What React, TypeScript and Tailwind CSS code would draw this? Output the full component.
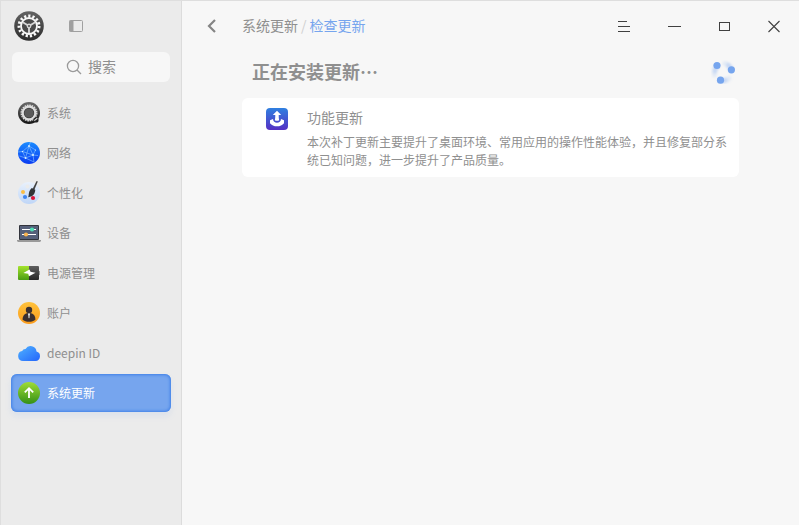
import React, { useState } from "react";

const LogoIcon = () => (
    <svg className="w-[30px] h-[30px]" viewBox="0 0 30 30">
        <defs>
            <linearGradient id="logo" x1="0" y1="0" x2="0" y2="1">
                <stop offset="0" stopColor="#636363" />
                <stop offset="1" stopColor="#2c2c2c" />
            </linearGradient>
        </defs>
        <circle cx="15" cy="15" r="14.8" fill="url(#logo)" />
        <circle cx="15" cy="15" r="10" fill="none" stroke="#f8f8f8" strokeWidth="3" strokeDasharray="2.2 1.988" />
        <circle cx="15" cy="15" r="8" fill="#4a4a4a" stroke="#f8f8f8" strokeWidth="1.800" />
        <path d="M15 15v7M15 15l-6.200-3.800M15 15l6.200-3.800" stroke="#d6d6d6" strokeWidth="1.900" />
        <circle cx="15" cy="15" r="2.400" fill="#d6d6d6" />
        <circle cx="15" cy="15" r="1.100" fill="#555" />
    </svg>
);

const SystemeIcon = () => (
    <svg className="w-[22px] h-[22px]" viewBox="0 0 22 22">
        <defs>
            <linearGradient id="sys" x1="0" y1="0" x2="0" y2="1">
                <stop offset="0" stopColor="#6a6a6a" />
                <stop offset="1" stopColor="#151515" />
            </linearGradient>
        </defs>
        <circle cx="11" cy="11" r="11" fill="url(#sys)" />
        <circle cx="11" cy="11" r="7.800" fill="none" stroke="#dcdcdc" strokeWidth="1.400" strokeDasharray="1.700 .75" />
        <circle cx="11" cy="11" r="6.300" fill="#3a3a3a" stroke="#dcdcdc" strokeWidth="2.200" />
        <circle cx="11" cy="11" r="4.600" fill="#5a5a5a" />
        <circle cx="18" cy="18" r="2.600" fill="#222" />
        <path d="M16.300 18.600l3-2.400" stroke="#ddd" strokeWidth="1.200" />
    </svg>
);

const ReseauIcon = () => (
    <svg className="w-[22px] h-[22px]" viewBox="0 0 22 22">
        <defs>
            <linearGradient id="net" x1="0" y1="0" x2="0" y2="1">
                <stop offset="0" stopColor="#1a8bff" />
                <stop offset="1" stopColor="#0a3cf2" />
            </linearGradient>
        </defs>
        <circle cx="11" cy="11" r="11" fill="url(#net)" />
        <path
            d="M11 4L4.500 9.500M11 4l4 9M11 4L7.500 16M11 4l6.500 4M4.500 9.500l10.500 3.500M4.500 9.500l3 6.500M15 13l-7.500 3M15 13l2.500-5M15 13l5 .5M15 13l1 7M7.500 16l8.500 4M7.500 16L1.500 14M11 4l1.500-4M4.500 9.500L0 10"
            fill="none"
            stroke="#8cc4ff"
            strokeWidth=".6"
        />
        <g fill="#d9efff">
            <circle cx="11" cy="4" r=".9" />
            <circle cx="4.500" cy="9.500" r=".7" />
            <circle cx="15" cy="13" r="1" />
            <circle cx="7.500" cy="16" r=".9" />
            <circle cx="17.500" cy="8" r=".6" />
        </g>
    </svg>
);

const PersonnalisationIcon = () => (
    <svg className="w-[22px] h-[22px] overflow-visible" viewBox="0 0 22 22">
        <defs>
            <linearGradient id="pal" x1="0" y1="0" x2="0" y2="1">
                <stop offset="0" stopColor="#e9f1fc" />
                <stop offset="1" stopColor="#bfd6f7" />
            </linearGradient>
        </defs>
        <circle cx="11" cy="11" r="11" fill="url(#pal)" />
        <circle cx="9.500" cy="4.500" r="2" fill="#ebebeb" />
        <circle cx="5" cy="10" r="2" fill="#fbbe45" />
        <circle cx="7" cy="15" r="2.100" fill="#3f86f0" />
        <circle cx="15" cy="16" r="2.100" fill="#d8133c" />
        <path d="M18.600-1l1.200.6-3.300 8-1.800-.8z" fill="#444" />
        <path d="M13.800 6l3.500 1.800c-.3 3.400-1.500 7-7.200 7.400.8-1.200.4-2.500.9-4.400.4-2 1.500-3.700 2.800-4.800z" fill="#2f3338" />
    </svg>
);

const AppareilIcon = () => (
    <svg className="w-6 h-[22px]" viewBox="0 0 24 22">
        <rect x="2" y="3" width="20" height="15" rx="1" fill="#32343c" />
        <rect x="3" y="4" width="18" height="13" fill="#56607a" />
        <path d="M5 7.500h14M5 12.500h14" stroke="#fff" strokeWidth="1" />
        <circle cx="15" cy="7.500" r="2.100" fill="#4fe0b5" />
        <circle cx="9" cy="12.500" r="2.100" fill="#fbb552" />
        <path d="M0 18h24v1l-1 1H1l-1-1z" fill="#9a9a9a" />
    </svg>
);

const EnergieIcon = () => (
    <svg className="w-[22px] h-[22px]" viewBox="0 0 22 22">
        <defs>
            <linearGradient id="bat" x1="0" y1="0" x2="0" y2="1">
                <stop offset="0" stopColor="#a5e32d" />
                <stop offset="1" stopColor="#4a9d13" />
            </linearGradient>
            <linearGradient id="bat2" x1="0" y1="0" x2="0" y2="1">
                <stop offset="0" stopColor="#5e5e5e" />
                <stop offset="1" stopColor="#262626" />
            </linearGradient>
        </defs>
        <path d="M1 4h10v14H1a1 1 0 01-1-1V5a1 1 0 011-1z" fill="url(#bat)" />
        <path d="M11 4h9a1 1 0 011 1v12a1 1 0 01-1 1h-9z" fill="url(#bat2)" />
        <path d="M21.500 9v4" stroke="#999" />
        <path d="M11.500 7.500L12.500 9.800l5 .9-6.500 3.500-.8-2.500-4.800-.7z" fill="#fff" />
    </svg>
);

const CompteIcon = () => (
    <svg className="w-[22px] h-[22px]" viewBox="0 0 22 22">
        <defs>
            <linearGradient id="acc" x1="0" y1="0" x2="0" y2="1">
                <stop offset="0" stopColor="#ffc23b" />
                <stop offset="1" stopColor="#fb9c1c" />
            </linearGradient>
        </defs>
        <circle cx="11" cy="11" r="11" fill="url(#acc)" />
        <circle cx="11" cy="8" r="3.200" fill="#3b3030" />
        <path d="M9.500 11h3c3 .6 4.800 2.500 5 6.500-1.500 1.600-4 2.300-6.500 2.300s-5-.7-6.500-2.300c.2-4 2-5.900 5-6.500z" fill="#3b3030" />
        <path d="M9.800 11.500L11 16.500l1.200-5z" fill="#fff" />
        <path d="M11 11.500l.8 4-.8 1-.8-1z" fill="#999" />
    </svg>
);

const NuageIcon = () => (
    <svg className="w-[22px] h-[22px]" viewBox="0 0 22 22">
        <defs>
            <linearGradient id="cloud" x1="0" y1="0" x2="1" y2="1">
                <stop offset="0" stopColor="#4fb2ff" />
                <stop offset="1" stopColor="#2365fb" />
            </linearGradient>
        </defs>
        <path d="M5 19a5 5 0 01-.8-9.900 3.300 3.300 0 013.300-2.200A6 6 0 0118.500 9.600 4.800 4.800 0 0117.500 19z" fill="url(#cloud)" />
    </svg>
);

const MiseAJourIcon = () => (
    <svg className="w-[22px] h-[22px]" viewBox="0 0 22 22">
        <defs>
            <linearGradient id="maj" x1="0" y1="0" x2="0" y2="1">
                <stop offset="0" stopColor="#9fdc35" />
                <stop offset="1" stopColor="#349016" />
            </linearGradient>
        </defs>
        <circle cx="11" cy="11" r="11" fill="url(#maj)" />
        <path d="M11 16V6.500M6.800 10.300L11 6.200l4.200 4.100" fill="none" stroke="#fff" strokeWidth="1.800" />
    </svg>
);

const FonctionIcon = () => (
    <svg className="w-[22px] h-[22px] shrink-0" viewBox="0 0 22 22">
        <defs>
            <linearGradient id="fn" x1="0" y1="0" x2="0" y2="1">
                <stop offset="0" stopColor="#2f80e0" />
                <stop offset="1" stopColor="#5630c4" />
            </linearGradient>
        </defs>
        <rect width="22" height="22" rx="4" fill="url(#fn)" />
        <path d="M4 12.300l3-1.300c.2 2.600 1.800 3.700 4 3.700s3.800-1.100 4-3.700l3 1.300v2.900c-1.600 2.100-4 3.100-7 3.100s-5.400-1-7-3.100z" fill="#fff" />
        <path d="M11 2.800l4.200 4.300h-2.500c0 2 .1 3.500.5 5.200-1.300.7-3.100.7-4.400 0 .4-1.700.5-3.200.5-5.200H6.800z" fill="#fff" />
    </svg>
);

const Chargement = () => (
    <svg className="w-6 h-6" viewBox="0 0 24 24" role="status" aria-label="正在安装更新">
        <defs>
            <filter id="flou" x="-50%" y="-50%" width="200%" height="200%">
                <feGaussianBlur stdDeviation="1" />
            </filter>
        </defs>
        <g fill="none" stroke="#76a5ee" strokeLinecap="round" filter="url(#flou)">
            <path d="M6 6.500Q2.500 10 3.500 15" strokeWidth="5" opacity=".15" />
            <path d="M5.500 7Q4.500 8.500 4 11" strokeWidth="5" opacity=".25" />
            <path d="M20 10Q18.500 4.500 14 3.500" strokeWidth="5" opacity=".15" />
            <path d="M20 9Q19.500 7 17.500 5.500" strokeWidth="5" opacity=".25" />
            <path d="M9 20.500Q15 22 18 18.500" strokeWidth="5" opacity=".15" />
            <path d="M10 20.500Q12 21 14 20" strokeWidth="5" opacity=".25" />
        </g>
        <g fill="#76a5ee">
            <circle cx="6" cy="5.500" r="3.600" />
            <circle cx="20.400" cy="9.800" r="3.600" />
            <circle cx="9.500" cy="20.200" r="3.600" />
        </g>
    </svg>
);

const menu = [
    { id: "system", nom: "系统", icon: <SystemeIcon /> },
    { id: "network", nom: "网络", icon: <ReseauIcon /> },
    { id: "personalization", nom: "个性化", icon: <PersonnalisationIcon /> },
    { id: "device", nom: "设备", icon: <AppareilIcon /> },
    { id: "power", nom: "电源管理", icon: <EnergieIcon /> },
    { id: "account", nom: "账户", icon: <CompteIcon /> },
    { id: "deepinid", nom: "deepin ID", icon: <NuageIcon /> },
    { id: "update", nom: "系统更新", icon: <MiseAJourIcon /> },
];

const App: React.FC = () => {
    const [actif, setActif] = useState("update");
    const [recherche, setRecherche] = useState("");

    return (
        <div lang="zh-CN" className="flex min-h-screen border-t border-l border-[#dedede] bg-[#f7f7f7] font-['Noto_Sans_CJK_SC',sans-serif] text-[#8f8f8f]">
            <aside className="w-[181px] shrink-0 border-r border-[#dcdcdc] bg-[#ebebeb] px-[10px]">
                <div className="mb-px flex h-[50px] items-center gap-6 pl-[3px]">
                    <LogoIcon />
                    <button type="button" aria-label="侧边栏">
                        <svg className="w-4 h-4" viewBox="0 0 16 16">
                            <rect x="1.500" y="2.500" width="13" height="11" rx="1" fill="none" stroke="#a0a0a0" />
                            <path d="M1.500 2.500h4v11h-4z" fill="#a0a0a0" />
                        </svg>
                    </button>
                </div>

                <label className="mx-px flex h-[30px] items-center justify-center gap-[6px] rounded-md bg-[#f7f7f7]">
                    <svg className="w-4 h-4" viewBox="0 0 16 16" fill="none" stroke="#9a9a9a" strokeWidth="1.300">
                        <circle cx="7" cy="7" r="5.600" />
                        <path d="M11 11l4 4" />
                    </svg>
                    <input
                        type="text"
                        aria-label="搜索"
                        placeholder="搜索"
                        className="field-sizing-content max-w-[110px] bg-transparent pb-[2px] text-sm outline-none placeholder:text-[#8f8f8f]"
                        value={recherche}
                        onChange={(e) => setRecherche(e.target.value)}
                    />
                </label>

                <nav className="mt-3 flex flex-col gap-[2px]">
                    {menu.map((m) => (
                        <button
                            key={m.id}
                            type="button"
                            aria-current={actif === m.id ? "page" : undefined}
                            onClick={() => setActif(m.id)}
                            className={
                                actif === m.id
                                    ? "flex h-[38px] items-center gap-[7px] rounded-md bg-[#76a5ee] pl-[7px] text-xs text-white shadow-[inset_0_0_3px_1px_#3f80e8,0_4px_6px_#76a5ee22]"
                                    : "flex h-[38px] items-center gap-[7px] rounded-md pl-[7px] text-xs"
                            }
                        >
                            <span className="flex w-[22px] justify-center *:shrink-0">{m.icon}</span>
                            {m.nom}
                        </button>
                    ))}
                </nav>
            </aside>

            <main className="min-w-0 flex-1">
                <header className="flex h-[50px] items-center pr-[17px] pl-[22px]">
                    <button type="button" aria-label="返回" className="mr-[22px]">
                        <svg className="w-4 h-4" viewBox="0 0 16 16" fill="none" stroke="#858585" strokeWidth="2.200">
                            <path d="M11 2L5 8l6 6" />
                        </svg>
                    </button>
                    <nav className="flex gap-[3px] pb-[2px] text-sm">
                        <a href="#update">系统更新</a>
                        <span className="text-[#d0d0d0]">/</span>
                        <a href="#check" className="text-[#76a5ee]">检查更新</a>
                    </nav>
                    <div className="ml-auto flex gap-[34px] text-[#404040]">
                        <button type="button" aria-label="菜单">
                            <svg className="w-4 h-4" viewBox="0 0 16 16" stroke="currentColor">
                                <path d="M2 3.500h9M2 8.500h12M2 13.500h12" />
                            </svg>
                        </button>
                        <button type="button" aria-label="最小化">
                            <svg className="w-4 h-4" viewBox="0 0 16 16" stroke="currentColor">
                                <path d="M2 8.500h13" />
                            </svg>
                        </button>
                        <button type="button" aria-label="最大化">
                            <svg className="w-4 h-4" viewBox="0 0 16 16" fill="none" stroke="currentColor">
                                <rect x="3.500" y="4.500" width="10" height="8" />
                            </svg>
                        </button>
                        <button type="button" aria-label="关闭">
                            <svg className="w-4 h-4" viewBox="0 0 16 16" stroke="currentColor" strokeWidth="1.100">
                                <path d="M2.500 3l11 11M13.500 3l-11 11" />
                            </svg>
                        </button>
                    </div>
                </header>

                <section className="px-[60px]">
                    <div className="mb-[5px] flex h-[42px] items-center justify-between pr-1 pl-[10px]">
                        <h1 className="pb-[2px] text-lg font-bold">正在安装更新…</h1>
                        <Chargement />
                    </div>
                    <article className="flex gap-[19px] rounded-md bg-white pt-[10px] pr-[10px] pb-2 pl-6">
                        <FonctionIcon />
                        <div>
                            <h2 className="text-sm leading-[18px]">功能更新</h2>
                            <p className="mt-[7px] text-xs leading-[18px]">
                                本次补丁更新主要提升了桌面环境、常用应用的操作性能体验，并且修复部分系统已知问题，进一步提升了产品质量。
                            </p>
                        </div>
                    </article>
                </section>
            </main>
        </div>
    );
};

export default App;
